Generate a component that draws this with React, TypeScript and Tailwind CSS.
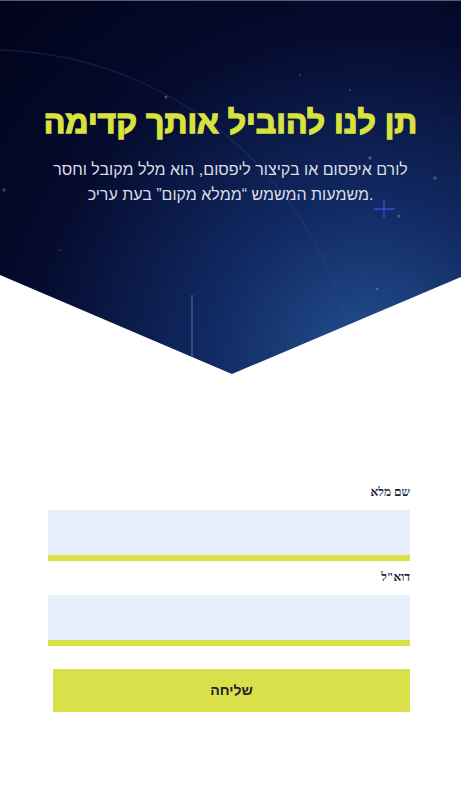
import React from "react";

const Hero = () => {
  return (
    <div className="relative h-[374px] w-full overflow-hidden bg-[radial-gradient(ellipse_at_80%_95%,#24508f_0%,#112a63_30%,#050b2e_65%,#02031a_100%)] [clip-path:polygon(0_0,100%_0,100%_277px,50.3%_374px,0_275px)]">
      {/* top hairline */}
      <div className="absolute left-0 top-0 h-px w-full bg-[#5a5d70]" />
      {/* decorative arc + sparks */}
      <svg className="absolute inset-0" width="461" height="374" viewBox="0 0 461 374">
        <circle cx="-10" cy="420" r="370" fill="none" stroke="#3a4a8a" strokeOpacity="0.35" strokeWidth="1.2" />
        <line x1="192" y1="295" x2="192" y2="358" stroke="#8aa0d8" strokeOpacity="0.6" strokeWidth="1" />
        <line x1="384" y1="200" x2="384" y2="218" stroke="#3355ee" strokeWidth="1.2" />
        <line x1="374" y1="209" x2="395" y2="209" stroke="#3355ee" strokeWidth="1.2" />
        <circle cx="166" cy="97" r="1.6" fill="#8a93b5" opacity="0.5" />
        <circle cx="370" cy="158" r="1.8" fill="#8a93b5" opacity="0.5" />
        <circle cx="435" cy="178" r="1.8" fill="#8a93b5" opacity="0.4" />
        <circle cx="4" cy="190" r="1.8" fill="#8a93b5" opacity="0.4" />
        <circle cx="399" cy="216" r="1.5" fill="#8a93b5" opacity="0.5" />
        <circle cx="377" cy="289" r="1.3" fill="#8a93b5" opacity="0.5" />
        <circle cx="300" cy="75" r="1" fill="#8a93b5" opacity="0.4" />
        <circle cx="350" cy="90" r="1" fill="#8a93b5" opacity="0.4" />
        <circle cx="60" cy="250" r="1" fill="#8a93b5" opacity="0.3" />
        <circle cx="448" cy="120" r="1" fill="#8a93b5" opacity="0.3" />
      </svg>
      <div dir="rtl" className="relative flex flex-col items-center px-2 pt-[99px] text-center font-['Liberation_Sans',Arial,sans-serif]">
        <h1 className="text-[32px] font-bold leading-[46px] text-[#d9e23e] [-webkit-text-stroke:1.3px_#d9e23e]">תן לנו להוביל אותך קדימה</h1>
        <p dir="ltr" className="mt-[12px] w-[380px] text-center text-[16px] leading-[25px] text-[#dcdde4]">
          לורם איפסום או בקיצור ליפסום, הוא מלל מקובל וחסר משמעות המשמש “ממלא מקום” בעת עריכ.
        </p>
      </div>
    </div>
  );
};

const Field = ({ label }: { label: string }) => (
  <div className="flex flex-col">
    <label className="mb-[9px] text-right text-[12px] font-bold leading-[18px] text-[#1a1f3d] font-['Liberation_Serif',serif]">{label}</label>
    <div className="h-[51px] w-full border-b-[6px] border-[#d9e04a] bg-[#e8effc]" />
  </div>
);

export default function App() {
  return (
    <div className="min-h-[793px] w-full bg-white">
      <Hero />
      <div dir="rtl" className="flex flex-col gap-[7px] pl-[48px] pr-[51px] pt-[109px]">
        <Field label="שם מלא" />
        <Field label={'דוא"ל'} />
        <button className="ml-[5px] mt-[16px] h-[43px] bg-[#d9e04a] text-[14px] font-bold text-[#1f2330] font-['Liberation_Sans',Arial,sans-serif]">
          שליחה
        </button>
      </div>
    </div>
  );
}
